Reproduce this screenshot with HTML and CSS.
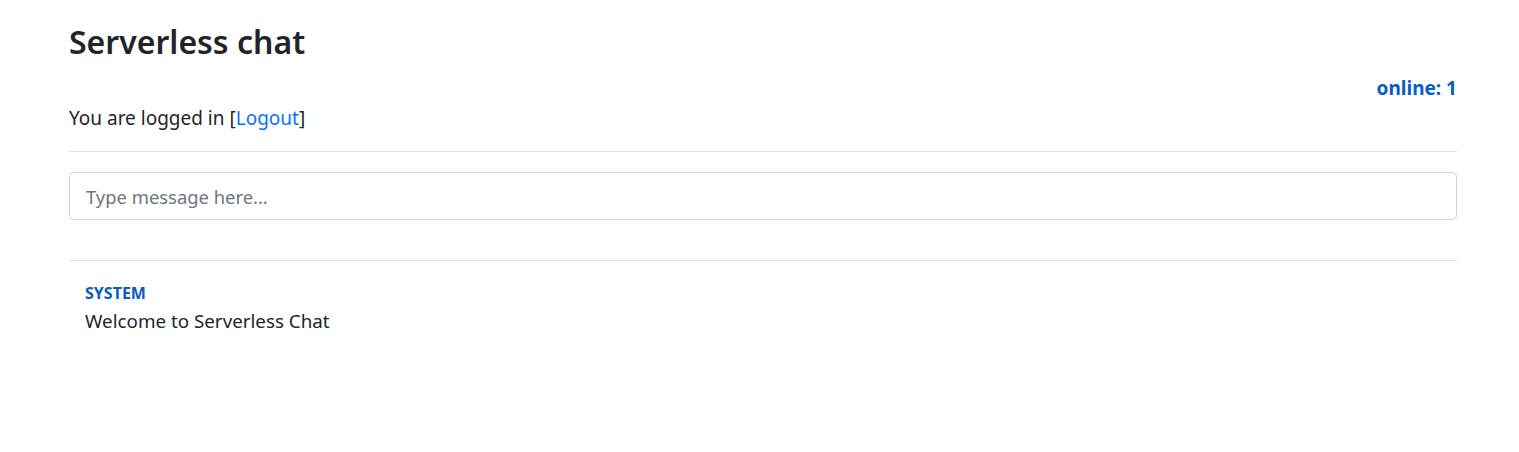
FILE: index.html
```html
<!DOCTYPE html>
<html lang="en">
<head>
<meta charset="utf-8">
<title>Serverless chat</title>
<link rel="stylesheet" href="styles.css">
</head>
<body>
<div class="container">
  <h1 class="title">Serverless chat</h1>
  <div class="online">online: 1</div>
  <p class="status">You are logged in [<a href="#" class="logout">Logout</a>]</p>
  <hr class="sep">
  <input class="msg-input" type="text" placeholder="Type message here...">
  <hr class="sep sep-list">
  <div class="messages">
    <div class="message">
      <div class="author">SYSTEM</div>
      <div class="text">Welcome to Serverless Chat</div>
    </div>
  </div>
</div>
</body>
</html>
```
FILE: styles.css
```css
* { box-sizing: border-box; }
html, body { margin: 0; padding: 0; background: #fff; }
body {
  font-family: "Noto Sans", "Open Sans", sans-serif;
  font-size: 16px;
  line-height: 1.5;
  color: #212529;
}
.container {
  width: 1388px;
  margin-left: 69px;
  padding-top: 22px;
}
.title {
  margin: 0;
  font-size: 32px;
  font-weight: 600;
  line-height: 40px;
}
.online {
  text-align: right;
  font-weight: 700;
  font-size: 19px;
  color: #0a5cc2;
  margin-top: 13px;
  line-height: 26px;
}
.status {
  margin: 4px 0 0;
  font-size: 19px;
  line-height: 26px;
}
.logout { color: #0d6efd; text-decoration: none; }
.sep {
  border: 0;
  border-top: 1px solid #dee2e6;
  margin: 20px 0 20px;
}
.sep-list { margin: 40px 0 0; }
.msg-input {
  display: block;
  width: 100%;
  height: 48px;
  padding: 8px 16px;
  font-family: inherit;
  font-size: 18.4px;
  color: #212529;
  border: 1px solid #ced4da;
  border-radius: 5px;
  outline: none;
}
.msg-input::placeholder { color: #6c757d; }
.messages { padding: 21px 16px; }
.author {
  font-size: 16px;
  font-weight: 700;
  color: #0a5cc2;
  text-transform: uppercase;
  line-height: 22px;
}
.text {
  font-size: 18.8px;
  line-height: 28px;
  margin-top: 3px;
}
```
